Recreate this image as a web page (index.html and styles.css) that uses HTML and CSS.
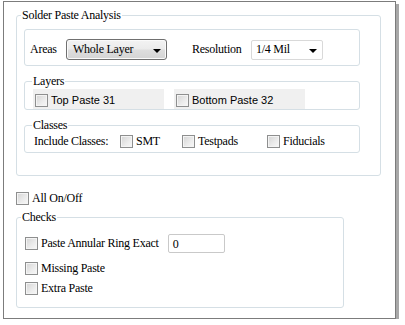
FILE: index.html
```html
<!DOCTYPE html>
<html lang="en">
<head>
    <meta charset="UTF-8">
    <title>Solder Paste Analysis</title>
    <link rel="stylesheet" href="styles.css">
</head>
<body>
    <div class="window">
        <fieldset class="group main">
            <legend>Solder Paste Analysis</legend>

            <div class="box areas">
                <span class="lbl lbl-areas">Areas</span>
                <div class="combo combo-btn"><span>Whole Layer</span><i class="arrow"></i></div>
                <span class="lbl lbl-res">Resolution</span>
                <div class="combo combo-edit"><span>1/4 Mil</span><i class="arrow"></i></div>
            </div>

            <fieldset class="group sub layers">
                <legend>Layers</legend>
                <div class="layer-row">
                    <label class="layer"><span class="cb"></span>Top Paste 31</label>
                    <label class="layer"><span class="cb"></span>Bottom Paste 32</label>
                </div>
            </fieldset>

            <fieldset class="group sub classes">
                <legend>Classes</legend>
                <div class="class-row">
                    <span class="inc">Include Classes:</span>
                    <label class="chk w-smt"><span class="cb"></span>SMT</label>
                    <label class="chk w-test"><span class="cb"></span>Testpads</label>
                    <label class="chk"><span class="cb"></span>Fiducials</label>
                </div>
            </fieldset>
        </fieldset>

        <label class="chk all"><span class="cb"></span>All On/Off</label>

        <fieldset class="group checks">
            <legend>Checks</legend>
            <div class="check-row first">
                <label class="chk"><span class="cb"></span>Paste Annular Ring Exact</label>
                <span class="num">0</span>
            </div>
            <div class="check-row">
                <label class="chk"><span class="cb"></span>Missing Paste</label>
            </div>
            <div class="check-row">
                <label class="chk"><span class="cb"></span>Extra Paste</label>
            </div>
        </fieldset>
    </div>
</body>
</html>
```
FILE: styles.css
```css
body {
    margin: 0;
    padding: 1px 0 0 3px;
    background: #fff;
    font-family: "Liberation Serif", "Times New Roman", serif;
    font-size: 12px;
    letter-spacing: -0.25px;
    color: #000;
}
.window {
    box-sizing: border-box;
    width: 393px;
    height: 318px;
    border: 1px solid #7c7c7c;
    box-shadow: 3px 3px 0 #a8a8a8;
    background: #fff;
    padding: 6px 12px 0;
}
.group {
    box-sizing: border-box;
    margin: 0;
    border: 1px solid #d5dfe5;
    border-radius: 3px;
}
.group legend {
    padding: 0 1px;
    line-height: 14px;
}
.main {
    width: 365px;
    padding: 7px 7px 22px;
}
.main > legend { margin-left: -3px; }

.box {
    box-sizing: border-box;
    width: 336px;
    border: 1px solid #d5dfe5;
    border-radius: 3px;
}
.areas {
    display: flex;
    align-items: center;
    padding: 9px 5px 5px;
}
.lbl-areas { width: 36px; }
.lbl-res { margin-left: 25px; width: 59px; }
.combo {
    box-sizing: border-box;
    height: 21px;
    display: flex;
    align-items: center;
    justify-content: space-between;
    border-radius: 3px;
}
.combo-btn {
    width: 101px;
    padding: 0 5px 0 6px;
    border: 1px solid #707070;
    background: linear-gradient(#f3f3f3 0%, #ebebeb 48%, #dedede 52%, #d4d4d4 100%);
    box-shadow: inset 0 0 0 1px #fafafa;
}
.combo-edit {
    width: 72px;
    height: 20px;
    padding: 0 5px 0 4px;
    border: 1px solid #d9d9d9;
    border-radius: 2px;
    background: #fff;
}
.arrow {
    width: 0;
    height: 0;
    border-left: 4px solid transparent;
    border-right: 4px solid transparent;
    border-top: 4px solid #000;
    margin-top: 2px;
}

.sub {
    width: 336px;
    margin-top: 8px;
}
.layers { padding: 1px 8px 0; }
.layers > legend { margin-left: -1px; }
.layer-row {
    display: flex;
    gap: 10px;
}
.layer {
    box-sizing: border-box;
    width: 131px;
    height: 20px;
    padding: 2px 2px 0;
    display: flex;
    align-items: center;
    gap: 3px;
    background: #f0f0f0;
    font-family: "Liberation Sans", Arial, sans-serif;
    font-size: 11px;
    letter-spacing: 0;
}

.classes { padding: 1px 9px 2px; }
.classes > legend { margin-left: -2px; }
.class-row {
    display: flex;
    align-items: center;
    height: 17px;
}
.inc { width: 86px; }
.w-smt { width: 62px; }
.w-test { width: 85px; }

.chk {
    display: flex;
    align-items: center;
    gap: 3px;
}
.cb {
    box-sizing: border-box;
    flex: none;
    width: 13px;
    height: 13px;
    border: 1px solid #8e8f8f;
    background: linear-gradient(135deg, #d4d4d4 0%, #ececec 60%, #f8f8f8 100%);
    box-shadow: inset 0 0 0 1px #f4f4f4;
}

.all {
    margin-top: 16px;
    height: 13px;
}
.checks {
    width: 328px;
    margin-top: 5px;
    padding: 10px 8px 12px;
}
.checks > legend { margin-left: -4px; }
.check-row {
    display: flex;
    align-items: center;
    height: 13px;
    margin-top: 7px;
}
.check-row.first {
    height: 19px;
    margin-top: 0;
}
.check-row + .check-row { margin-top: 9px; }
.check-row + .check-row + .check-row { margin-top: 7px; }
.num {
    box-sizing: border-box;
    width: 57px;
    height: 19px;
    margin-left: 9px;
    padding: 2px 4px;
    border: 1px solid #c9c9c9;
    border-radius: 2px;
}
```
